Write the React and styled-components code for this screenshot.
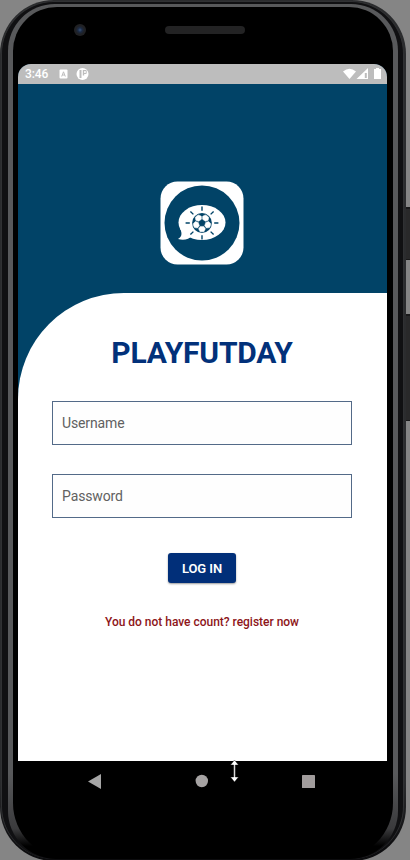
import React from 'react';
import styled, { createGlobalStyle } from 'styled-components';

const GlobalStyle = createGlobalStyle`
  * { box-sizing: border-box; }
  body { margin: 0; background: #858585; font-family: Roboto, sans-serif; overflow: hidden; }
`;

const Stage = styled.main`
  position: relative;
  width: 410px;
  height: 860px;
  overflow: hidden;
  background: #858585;
`;

const SideKey = styled.div`
  position: absolute;
  left: 405px;
  top: ${(p) => p.$top}px;
  width: 6px;
  height: ${(p) => p.$height}px;
  background: #29292a;
  border-top: 2px solid #19191a;
  border-bottom: 1px solid #19191a;
`;

const Shell = styled.div`
  position: relative;
  width: 406px;
  height: 861px;
  padding: 1px 2px 2px 1px;
  border-radius: 54px;
  background: linear-gradient(#2b2c2e 0, #2b2c2e 780px, #0c0c0e 850px);
`;

const Groove = styled.div`
  height: 100%;
  padding: 2px 5px 0 6px;
  border-radius: 53px;
  background: #101012;
  border: 1px solid #303133;
  border-bottom: 0;
`;

const Rim = styled.div`
  height: 100%;
  padding: 3px 5px 0 5px;
  border-radius: 47px 47px 48px 48px;
  background: linear-gradient(#58595b 0, #58595b 770px, #3a3a3c 825px, #000 842px);
`;

const Glass = styled.div`
  height: 100%;
  padding: 1px 5px 0;
  border-radius: 44px 44px 56px 56px;
  background: #000;
  display: flex;
  flex-direction: column;
`;

const Forehead = styled.div`
  height: 56px;
  flex: none;
  display: flex;
  padding: 16px 0 0 56px;
  gap: 79px;
`;

const Camera = styled.div`
  width: 12px;
  height: 12px;
  border-radius: 50%;
  background: radial-gradient(circle, #38547c 0, #1c2a43 25%, #202124 50%, #222225 100%);
`;

const Speaker = styled.div`
  width: 80px;
  height: 8px;
  margin-top: 2px;
  border-radius: 4px;
  background: #232324;
`;

const Screen = styled.section`
  width: 369px;
  height: 697px;
  flex: none;
  overflow: hidden;
  border-radius: 13px 13px 0 0;
  background: #014367;
  display: flex;
  flex-direction: column;
`;

const StatusBar = styled.header`
  height: 20px;
  flex: none;
  display: flex;
  align-items: center;
  padding: 0 5px 0 7px;
  background: #bdbdbd;
  color: #fff;
  font-size: 12px;
  font-weight: 500;
  line-height: 20px;
`;

const Clock = styled.span`
  width: 34px;
  letter-spacing: -0.1px;
`;

const StatusArt = styled.svg`
  display: block;
  margin-left: ${(p) => p.$push || 0};
`;

const Hero = styled.div`
  height: 209px;
  flex: none;
  display: flex;
  justify-content: center;
  padding: 97px 2px 0 0;
`;

const Sheet = styled.form`
  flex: 1;
  border-radius: 106px 0 0 0;
  background: #fff;
  display: flex;
  flex-direction: column;
  align-items: center;
  padding: 40px 35px 0 34px;
`;

const Title = styled.h1`
  margin: 0 0 28px;
  height: 40px;
  line-height: 40px;
  font-size: 30px;
  font-weight: 700;
  letter-spacing: -0.2px;
  color: #02317a;
  white-space: nowrap;
`;

const Field = styled.input`
  width: 300px;
  height: 44px;
  flex: none;
  margin: 0 0 ${(p) => p.$gap}px;
  padding: 0 9px 1px;
  border: 1px solid #536a88;
  border-radius: 0;
  background: #fefefe;
  font: 400 14px Roboto, sans-serif;
  letter-spacing: -0.12px;
  color: #333;
  &::placeholder { color: #616161; opacity: 1; }
`;

const LoginButton = styled.button`
  width: 68px;
  height: 30px;
  margin: 0;
  padding: 0;
  border: 0;
  border-radius: 3px;
  background: #012f79;
  box-shadow: 0 1px 2px rgba(0, 0, 0, 0.4);
  color: #fff;
  font: 600 13px Roboto, sans-serif;
  letter-spacing: -0.1px;
`;

const RegisterLink = styled.a`
  margin-top: 29px;
  line-height: 20px;
  font-size: 12px;
  font-weight: 500;
  letter-spacing: -0.02px;
  color: #8d1519;
  white-space: nowrap;
`;

const NavBar = styled.nav`
  height: 40px;
  flex: none;
  display: flex;
  align-items: center;
  padding-left: 70px;
  gap: 94px;
`;

const NavIcon = styled.svg`
  display: block;
  flex: none;
`;

const ResizeCursor = styled.svg`
  position: absolute;
  left: 229px;
  top: 759px;
`;

const rays = [0, 45, 90, 135, 180, 225, 270, 315];
const panels = [36, 108, 180, 252, 324];

function Logo() {
  return (
    <svg width="84" height="84" viewBox="0 0 84 84">
      <rect x="0.5" y="0.5" width="83" height="83" rx="17" fill="#fff" />
      <circle cx="42" cy="42" r="37.5" fill="#014367" />
      <ellipse cx="42" cy="41.5" rx="23.5" ry="17.5" fill="#fff" />
      <path d="M20 47C23 54 21 56 18 58C24 60 29 58 32 55Z" fill="#fff" />
      <g stroke="#014367" strokeWidth="1.4">
        {rays.map((a) => (
          <path key={a} d="M42 29.8V25.6" transform={`rotate(${a} 42 42)`} />
        ))}
      </g>
      <circle cx="42" cy="42" r="9.9" fill="#014367" />
      {panels.map((a) => (
        <path
          key={a}
          d="M40.3 38.6L38.6 36.2L39.9 33.5Q42 32.9 44.1 33.5L45.4 36.2L43.7 38.6Z"
          transform={`rotate(${a} 42 42)`}
          fill="#fff"
          stroke="#fff"
          strokeWidth="0.5"
          strokeLinejoin="round"
        />
      ))}
    </svg>
  );
}

export default function App() {
  return (
    <Stage>
      <GlobalStyle />
      <SideKey $top={207} $height={53} />
      <SideKey $top={314} $height={107} />
      <Shell>
        <Groove>
          <Rim>
            <Glass>
              <Forehead>
                <Camera />
                <Speaker />
              </Forehead>
              <Screen>
                <StatusBar>
                  <Clock>3:46</Clock>
                  <StatusArt width="31" height="14" viewBox="0 0 31 14">
                    <rect x="0.5" y="2.5" width="8" height="9" rx="1" fill="#fff" />
                    <path d="M2.7 9.5L4.5 4.8L6.3 9.5M3.3 8H5.7" stroke="#bdbdbd" fill="none" />
                    <circle cx="23.5" cy="7" r="6" fill="#fff" />
                    <path d="M21.5 3V11" stroke="#bdbdbd" strokeWidth="2" />
                    <path d="M24.5 3V8.5" stroke="#bdbdbd" strokeWidth="1.4" />
                    <path d="M25 3.5H27.2V6.5H25" stroke="#bdbdbd" fill="none" />
                  </StatusArt>
                  <StatusArt $push="auto" width="39" height="14" viewBox="0 0 39 14">
                    <path d="M0 4.5Q6.5 -1 13 4.5L6.5 12Z" fill="#fff" />
                    <path d="M13.5 12L25 1V12Z" fill="#fff" />
                    <path d="M21.8 6H23.8V11H21.8Z" fill="#bdbdbd" />
                    <path d="M31 2H33V1H36V2H38V12H31Z" fill="#fff" />
                  </StatusArt>
                </StatusBar>
                <Hero><Logo /></Hero>
                <Sheet>
                  <Title>PLAYFUTDAY</Title>
                  <Field placeholder="Username" $gap={29} />
                  <Field placeholder="Password" $gap={35} />
                  <LoginButton type="button">LOG IN</LoginButton>
                  <RegisterLink>You do not have count? register now</RegisterLink>
                </Sheet>
              </Screen>
              <NavBar>
                <NavIcon width="13" height="15" viewBox="0 0 13 15"><path d="M0 7.5L13 0V15Z" fill="#a6a6a6" /></NavIcon>
                <NavIcon width="13" height="14" viewBox="0 0 13 14"><circle cx="6.8" cy="7" r="6.2" fill="#a6a3a3" /></NavIcon>
                <NavIcon width="13" height="13" viewBox="0 0 13 13"><rect width="13" height="13" rx="0.6" fill="#a19c9c" /></NavIcon>
              </NavBar>
            </Glass>
          </Rim>
        </Groove>
      </Shell>
      <ResizeCursor width="11" height="24" viewBox="0 0 11 24">
        <path d="M5.5 1L9.5 6H6.3V18H9.5L5.5 23L1.5 18H4.7V6H1.5Z" fill="#fff" stroke="#000" strokeWidth="0.4" />
      </ResizeCursor>
    </Stage>
  );
}
